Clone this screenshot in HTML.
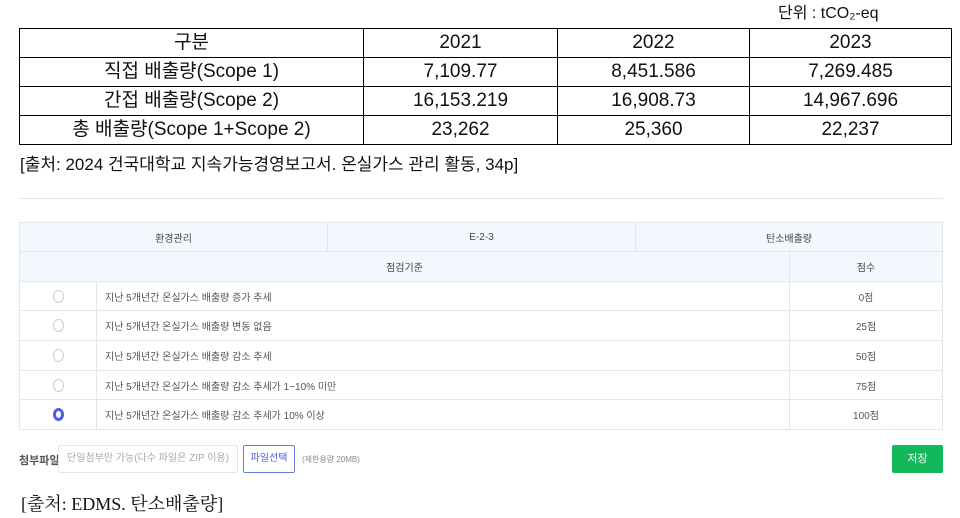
<!DOCTYPE html>
<html><head><meta charset="utf-8"><style>
body{margin:0;width:960px;height:518px;background:#fff;position:relative;overflow:hidden;font-family:"Liberation Sans","Noto Sans CJK KR",sans-serif}
.a{position:absolute}
table.t{position:absolute;left:19px;top:28px;border-collapse:collapse;font-family:"Liberation Sans","Noto Sans CJK KR",sans-serif;font-size:19px;color:#111}
table.t td{border:1px solid #000;height:28px;padding:0;text-align:center;line-height:28px}
.c{position:absolute;box-sizing:border-box;border:1px solid #e3e6ea;font-size:10px;color:#555;display:flex;align-items:center;justify-content:center}
.h{background:#f3f8fe;color:#444}
.l{justify-content:flex-start;padding-left:8px}
.r{display:inline-block;width:9px;height:11px;border:1px solid #ccc;border-radius:50%}
</style></head><body>
<div class="a" style="left:778px;top:-1px;font-size:16px;color:#111">단위 : tCO₂-eq</div>
<table class="t">
<tr><td style="width:343px">구분</td><td style="width:193px">2021</td><td style="width:191px">2022</td><td style="width:201px">2023</td></tr>
<tr><td>직접 배출량(Scope 1)</td><td>7,109.77</td><td>8,451.586</td><td>7,269.485</td></tr>
<tr><td>간접 배출량(Scope 2)</td><td>16,153.219</td><td>16,908.73</td><td>14,967.696</td></tr>
<tr><td>총 배출량(Scope 1+Scope 2)</td><td>23,262</td><td>25,360</td><td>22,237</td></tr>
</table>
<div class="a" style="left:20px;top:150px;font-size:17px;color:#111">[출처: 2024 건국대학교 지속가능경영보고서. 온실가스 관리 활동, 34p]</div>
<div class="a" style="left:19px;top:198px;width:924px;height:1px;background:#e6e6e6"></div>

<div class="c h" style="left:19px;top:222px;width:309px;height:30px">환경관리</div>
<div class="c h" style="left:327px;top:222px;width:309px;height:30px">E-2-3</div>
<div class="c h" style="left:635px;top:222px;width:308px;height:30px">탄소배출량</div>
<div class="c h" style="left:19px;top:251px;width:771px;height:31px">점검기준</div>
<div class="c h" style="left:789px;top:251px;width:154px;height:31px">점수</div>

<div class="c" style="left:19px;top:281px;width:78px;height:30px"><span class="r"></span></div>
<div class="c l" style="left:96px;top:281px;width:694px;height:30px">지난 5개년간 온실가스 배출량 증가 추세</div>
<div class="c" style="left:789px;top:281px;width:154px;height:30px">0점</div>

<div class="c" style="left:19px;top:310px;width:78px;height:31px"><span class="r"></span></div>
<div class="c l" style="left:96px;top:310px;width:694px;height:31px">지난 5개년간 온실가스 배출량 변동 없음</div>
<div class="c" style="left:789px;top:310px;width:154px;height:31px">25점</div>

<div class="c" style="left:19px;top:340px;width:78px;height:31px"><span class="r"></span></div>
<div class="c l" style="left:96px;top:340px;width:694px;height:31px">지난 5개년간 온실가스 배출량 감소 추세</div>
<div class="c" style="left:789px;top:340px;width:154px;height:31px">50점</div>

<div class="c" style="left:19px;top:370px;width:78px;height:30px"><span class="r"></span></div>
<div class="c l" style="left:96px;top:370px;width:694px;height:30px">지난 5개년간 온실가스 배출량 감소 추세가 1~10% 미만</div>
<div class="c" style="left:789px;top:370px;width:154px;height:30px">75점</div>

<div class="c" style="left:19px;top:399px;width:78px;height:31px"><span class="r" style="border:3px solid #4b5de8;width:5px;height:7px"></span></div>
<div class="c l" style="left:96px;top:399px;width:694px;height:31px">지난 5개년간 온실가스 배출량 감소 추세가 10% 이상</div>
<div class="c" style="left:789px;top:399px;width:154px;height:31px">100점</div>

<div class="a" style="left:19px;top:452px;font-size:11px;font-weight:bold;color:#555">첨부파일</div>
<div class="a" style="left:58px;top:445px;width:178px;height:26px;border:1px solid #e3e6ea;border-radius:2px;font-size:10px;color:#aaa;line-height:26px;text-align:center">단일첨부만 가능(다수 파일은 ZIP 이용)</div>
<div class="a" style="left:243px;top:445px;width:50px;height:26px;border:1px solid #6b7be0;border-radius:2px;font-size:10px;color:#4b5de8;line-height:26px;text-align:center">파일선택</div>
<div class="a" style="left:302px;top:454px;font-size:8px;color:#888">(제한용량 20MB)</div>
<div class="a" style="left:892px;top:445px;width:51px;height:28px;background:#12b85a;border-radius:2px;font-size:11px;color:#fff;line-height:28px;text-align:center">저장</div>
<div class="a" style="left:21px;top:490px;font-size:18px;color:#111;font-family:'Liberation Serif','Noto Serif CJK SC',serif">[출처: EDMS. 탄소배출량]</div>
</body></html>
